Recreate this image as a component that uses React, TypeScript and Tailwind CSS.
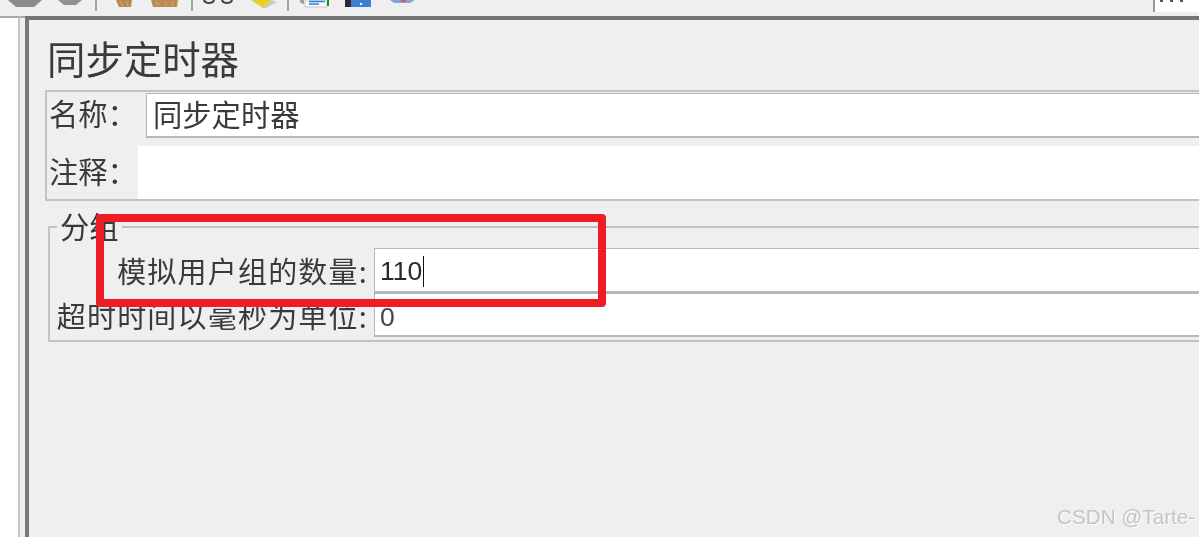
import * as React from 'react';

const CJK = "font-['Noto_Sans_CJK_SC','Liberation_Sans',sans-serif]";

const ToolbarSep: React.FC<{ className?: string }> = ({ className }) => (
  <div className={`w-[2px] h-[11px] shrink-0 bg-[#a2a2a2] ${className ?? ''}`} />
);

const Toolbar: React.FC = () => (
  <div className="relative h-[16px] flex items-start bg-[#efefef] overflow-hidden">
    <svg width="34" height="8" viewBox="0 0 34 8" className="ml-[8px] shrink-0">
      <path d="M0 0 L34 0 L26 7 L8 7 Z" fill="#8a8a8a" />
    </svg>
    <svg width="24" height="6" viewBox="0 0 24 6" className="ml-[16px] shrink-0">
      <path d="M0 0 L24 0 L18 5 L6 5 Z" fill="#929292" />
    </svg>
    <ToolbarSep className="ml-[13px]" />
    <svg width="20" height="8" viewBox="0 0 20 8" className="ml-[16px] shrink-0">
      <path d="M3 0 L19 0 L18 7 L6 7 Z" fill="#b98a4e" />
      <path d="M7 1 L10 6 M13 1 L15 6" stroke="#c9a06a" strokeWidth="1.5" />
    </svg>
    <svg width="29" height="8" viewBox="0 0 29 8" className="ml-[17px] shrink-0">
      <path d="M1 0 L28 0 L27 7 L3 7 Z" fill="#bb8d55" />
      <path d="M6 1 L9 6 M15 1 L17 6 M22 1 L23 6" stroke="#c9a06a" strokeWidth="1.5" />
    </svg>
    <ToolbarSep className="ml-[12px]" />
    <svg width="30" height="4" viewBox="0 0 30 4" className="ml-[10px] shrink-0">
      <path d="M1 0 C2 4 10 4 11 0 M19 0 C20 4 28 4 29 0" fill="none" stroke="#444" strokeWidth="2" />
    </svg>
    <svg width="28" height="9" viewBox="0 0 28 9" className="ml-[17px] shrink-0">
      <path d="M1 0 L22 0 L13 8 Z" fill="#e8cf2c" />
      <path d="M13 8 L22 0 L27 2 L16 8 Z" fill="#c8c8c8" />
    </svg>
    <ToolbarSep className="ml-[9px]" />
    <svg width="30" height="9" viewBox="0 0 30 9" className="ml-[11px] shrink-0">
      <path d="M1 0 V3 M3 0 V4" stroke="#555" strokeWidth="1" />
      <path d="M5 0 H27 V7 H5 Z" fill="#fbfbfb" stroke="#c8c8c8" />
      <path d="M9 1.5 H25 M9 4 H19" stroke="#2f7de0" strokeWidth="1.5" />
      <path d="M28 0 V6" stroke="#1f8a2f" strokeWidth="2" />
    </svg>
    <svg width="26" height="9" viewBox="0 0 26 9" className="ml-[15px] shrink-0">
      <path d="M0 0 H6 V7 H0 Z" fill="#2b2b2b" />
      <path d="M6 0 H26 V7 H6 Z" fill="#3f7fd0" />
      <path d="M15 3 H17 V5 H15 Z" fill="#ffffff" />
    </svg>
    <svg width="25" height="4" viewBox="0 0 25 4" className="ml-[19px] shrink-0">
      <path d="M0 0 H25 L20 3 H4 Z" fill="#8aa2dc" />
      <path d="M11 0 H16 V2 H11 Z" fill="#d26060" />
    </svg>
    <div className="ml-auto w-[46px] h-[12px] bg-white border-l-2 border-[#9a9a9a] flex gap-[7px] pl-[5px] shrink-0">
      <div className="w-[3px] h-[2px] bg-[#555]" />
      <div className="w-[3px] h-[2px] bg-[#555]" />
      <div className="w-[3px] h-[2px] bg-[#555]" />
    </div>
  </div>
);

const Field: React.FC<{ className?: string; children?: React.ReactNode }> = ({ className, children }) => (
  <div className={`bg-white border-l border-t border-[#b5b7bc] border-b-2 flex items-center ${className ?? ''}`}>
    {children}
  </div>
);

const App: React.FC = () => (
  <div className={`relative w-[1199px] h-[537px] overflow-hidden bg-[#efefef] flex flex-col text-[#3a3a3a] blur-[0.4px] ${CJK}`}>
    <Toolbar />
    <div className="flex-1 flex min-h-0">
      <div className="w-[20px] shrink-0 bg-white border-t-2 border-t-[#a9a9a9] border-r-2 border-r-[#c3c7cd]" />
      <div className="w-[5px] shrink-0 border-t-2 border-t-[#a9a9a9]" />
      <div className="flex-1 min-w-0 border-l-[4px] border-l-[#787878] border-t-[4px] border-t-[#757575] pt-[18px]">
        <h1 className="ml-[18px] h-[40px] text-[38.4px] leading-[38px] font-normal">同步定时器</h1>

        <div className="mt-[12px] ml-[16px] border-2 border-r-0 border-[#c2c2c2] h-[111px] flex flex-col">
          <div className="flex h-[45px] mt-[1px] text-[29.3px] leading-[38px]">
            <div className="w-[99px] pl-[2px] shrink-0">名称：</div>
            <Field className="flex-1 pl-[6px] pb-[4px]">同步定时器</Field>
          </div>
          <div className="flex flex-1 mt-[8px] text-[29.3px] leading-[48px]">
            <div className="w-[91px] pl-[2px] shrink-0">注释：</div>
            <div className="flex-1 bg-white" />
          </div>
        </div>

        <fieldset className="mt-[10px] ml-[19px] border-2 border-r-0 border-[#c2c2c2] pb-[3px]">
          <legend className="ml-[7px] px-[3px] h-[32px] text-[29.3px] leading-[29px]">分组</legend>
          <div className="grid grid-cols-[324px_1fr] text-[29px] tracking-[1.2px] mt-[5px]">
            <div className="h-[45px] leading-[44px] text-right pr-[6px]">模拟用户组的数量:</div>
            <Field className="h-[45px] pl-[5px] pt-[3px] font-['Liberation_Sans',sans-serif] text-[26.5px] tracking-normal text-[#2a2a2a]">
              110<span className="ml-[1px] w-[1px] h-[31px] bg-[#111]" />
            </Field>
            <div className="h-[44px] leading-[45px] text-right pr-[6px] whitespace-nowrap">超时时间以毫秒为单位:</div>
            <Field className="h-[44px] pl-[5px] pt-[7px] font-['Liberation_Sans',sans-serif] text-[26.5px] tracking-normal text-[#444]">0</Field>
          </div>
        </fieldset>
      </div>
    </div>

    <div className="absolute left-[96px] top-[214px] w-[510px] h-[93px] border-[8px] border-[#ee1c25] rounded-[4px]" />
    <div className="absolute left-[1057px] top-[504px] font-['Liberation_Sans',sans-serif] text-[20.7px] leading-[26px] text-[#c4c4c4] [text-shadow:1px_1px_1px_#ffffff]">
      CSDN @Tarte-
    </div>
  </div>
);

export default App;
